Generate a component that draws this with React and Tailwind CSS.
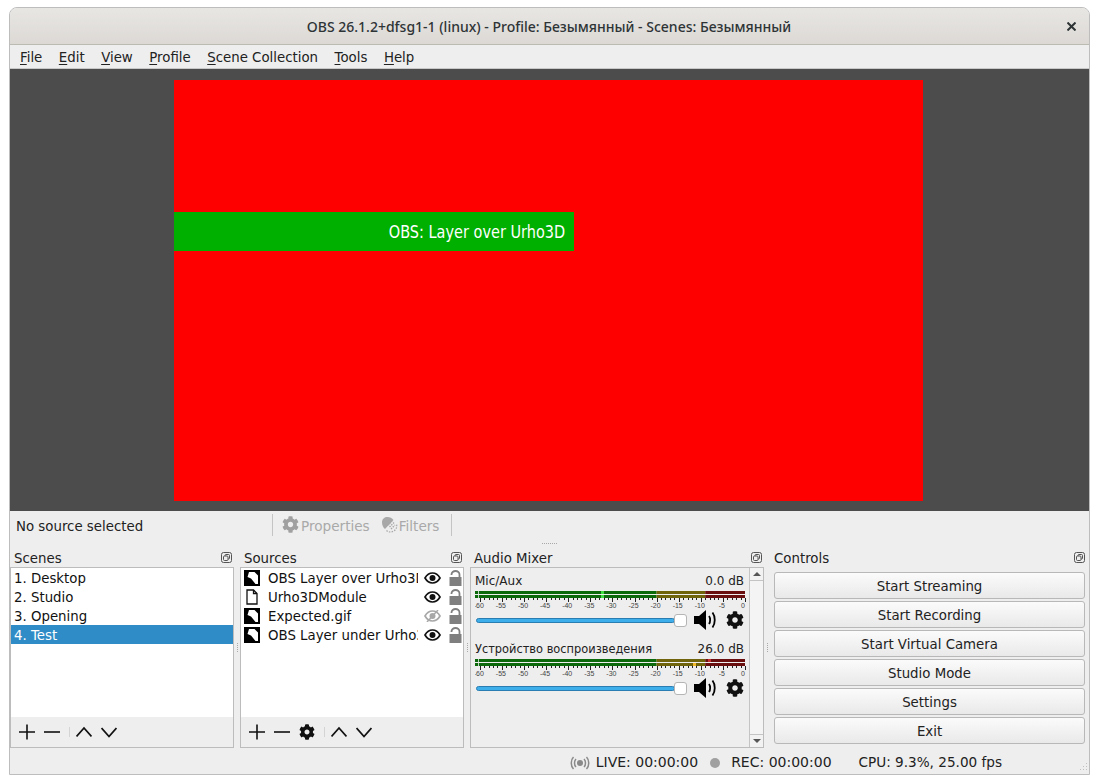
import { FaCog } from "react-icons/fa";

const FONT = "font-['DejaVu_Sans',sans-serif]";

const menus = [
  ["F", "ile"],
  ["E", "dit"],
  ["V", "iew"],
  ["P", "rofile"],
  ["S", "cene Collection"],
  ["T", "ools"],
  ["H", "elp"],
];

const scenes = ["1. Desktop", "2. Studio", "3. Opening", "4. Test"];

const sources = [
  { name: "OBS Layer over Urho3D", kind: "image", visible: true },
  { name: "Urho3DModule", kind: "file", visible: true },
  { name: "Expected.gif", kind: "image", visible: false },
  { name: "OBS Layer under Urho3D", kind: "image", visible: true },
];

const controls = ["Start Streaming", "Start Recording", "Start Virtual Camera", "Studio Mode", "Settings", "Exit"];

function FloatIcon() {
  return (
    <svg width="11" height="11" viewBox="0 0 11 11" fill="none" stroke="#555" strokeWidth="1">
      <rect x="0.5" y="0.5" width="10" height="10" rx="2" />
      <rect x="4" y="2.5" width="4.5" height="4.5" rx="1" />
      <rect x="2.5" y="4" width="4.5" height="4.5" rx="1" fill="#eee" />
    </svg>
  );
}

function Grip() {
  return (
    <div className="flex flex-col gap-[1px]">
      {[0, 1, 2, 3, 4].map((i) => (
        <div key={i} className="w-[1px] h-[1px] bg-[#a8a8a8]" />
      ))}
    </div>
  );
}

function Dock({ title, width, titlePad, children }) {
  return (
    <div className={`flex flex-col ${width}`}>
      <div className={`h-[20px] flex items-center justify-between ${titlePad} pr-[2px] text-[13.33px] text-[#222]`}>
        <span className="pt-[4px]">{title}</span>
        <FloatIcon />
      </div>
      {children}
    </div>
  );
}

function Plus() {
  return (
    <svg width="16" height="16" viewBox="0 0 16 16" stroke="#111" strokeWidth="1.6">
      <path d="M8 0.5V15.5M0 8H16" />
    </svg>
  );
}

function Minus() {
  return (
    <svg width="16" height="16" viewBox="0 0 16 16" stroke="#111" strokeWidth="1.6">
      <path d="M0 8H16" />
    </svg>
  );
}

function Chevron({ up }) {
  return (
    <svg width="16" height="16" viewBox="0 0 16 16" fill="none" stroke="#111" strokeWidth="1.8">
      <path d={up ? "M0.5 12.5L8 4L15.5 12.5" : "M0.5 4L8 12.5L15.5 4"} />
    </svg>
  );
}

function ToolSep() {
  return <div className="w-[1px] h-[10px] bg-[#d4d4d4]" />;
}

function ImageIcon() {
  return (
    <svg width="16" height="16" viewBox="0 0 16 16">
      <rect width="16" height="16" fill="#000" />
      <path d="M5 2H14V14H11.5L7 8.5L3.5 7Z" fill="#fff" />
      <path d="M10.5 2H14V5.5Z" fill="#000" />
    </svg>
  );
}

function FileIcon() {
  return (
    <svg width="16" height="16" viewBox="0 0 16 16" fill="none" stroke="#111" strokeWidth="1.3">
      <path d="M3 1H9.5L13 4.5V15H3Z" />
      <path d="M9.5 1V4.5H13" />
    </svg>
  );
}

function EyeIcon({ off }) {
  const color = off ? "#a8a8a8" : "#111";
  return (
    <svg width="17" height="12" viewBox="0 0 17 12" fill="none">
      <path d="M1 6C3 2.5 5.5 1 8.5 1S14 2.5 16 6C14 9.5 11.5 11 8.5 11S3 9.5 1 6Z" stroke={color} strokeWidth="1.7" />
      <circle cx="8.5" cy="6" r="3" fill={color} />
      {off && <path d="M14 0L3 12" stroke={color} strokeWidth="1.5" />}
    </svg>
  );
}

function LockIcon() {
  return (
    <svg width="13" height="16" viewBox="0 0 13 16" fill="none">
      <path d="M2.5 5V4.5C2.5 2.5 4.3 1 6.5 1S10.5 2.5 10.5 4.5V8" stroke="#7f7f7f" strokeWidth="1.8" />
      <rect x="0.5" y="7" width="12" height="9" fill="#7f7f7f" />
    </svg>
  );
}

function FilterIcon() {
  return (
    <svg width="18" height="18" viewBox="0 0 18 18" fill="none">
      <path d="M2 6C2 3 4.5 1 7.5 1C10 1 12 2 13.5 4L5 13C3 11.5 2 9 2 6Z" fill="#a8a8a8" />
      <path d="M8 9L12 5M9.5 11L14 6.5M11 13L15 9" stroke="#a8a8a8" strokeWidth="1.4" strokeDasharray="1.5 1" />
      <path d="M6.5 14.5C8.5 16.5 12 16.5 14.5 14.5S17 10 16.5 8" stroke="#a8a8a8" strokeWidth="1.2" strokeDasharray="1.5 1.2" />
    </svg>
  );
}

function SpeakerIcon() {
  return (
    <svg width="23" height="22" viewBox="0 0 23 22" fill="none">
      <path d="M0 7H5L12 1V21L5 15H0Z" fill="#000" />
      <path d="M15 7C16.5 9 16.5 13 15 15" stroke="#000" strokeWidth="1.8" />
      <path d="M18.5 3.5C21.5 7.5 21.5 14.5 18.5 18.5" stroke="#000" strokeWidth="1.8" />
    </svg>
  );
}

function Meter({ top, bottom }) {
  const x = (db) => 270 + db * 4.42;
  const ticks = [];
  for (let db = -60; db <= 0; db++) ticks.push(db);
  const labels = [];
  for (let db = -60; db <= 0; db += 5) labels.push(db);
  const bar = (y) => (
    <g key={y}>
      <rect x="0" y={y} width="3" height="3" fill="#0b680b" />
      <rect x={x(-60) - 1} y={y} width={x(-20) - x(-60) + 1} height="3" fill="#0b680b" />
      <rect x={x(-20)} y={y} width={x(-9) - x(-20)} height="3" fill="#6f640c" />
      <rect x={x(-9)} y={y} width={x(0) - x(-9)} height="3" fill="#690f0f" />
    </g>
  );
  return (
    <svg width="272" height="19" viewBox="0 0 272 19" className="block">
      {bar(0)}
      {bar(4)}
      {top && <rect x={top.x} y="0" width="3" height="3" fill={top.color} />}
      {bottom && <rect x={bottom.x} y="4" width="3" height="3" fill={bottom.color} />}
      {top && top.both && <rect x={top.x} y="4" width="3" height="3" fill={top.color} />}
      {ticks.map((db) => (
        <rect key={db} x={Math.round(x(db))} y="7" width="1" height={db % 5 === 0 ? 4 : 2} fill="#222" />
      ))}
      {labels.map((db) => (
        <text
          key={db}
          x={db === 0 ? 268 : x(db) - 1}
          y="17"
          textAnchor="middle"
          fontSize="7"
          fill="#444"
          fontFamily="Liberation Sans, sans-serif"
        >
          {db}
        </text>
      ))}
    </svg>
  );
}

function MixerStrip({ name, nameSize, db, top, bottom }) {
  return (
    <div className="flex flex-col h-[68px]">
      <div className="h-[20px] flex items-center justify-between pl-[4px] pr-[5px] text-[12px] text-[#222] leading-none">
        <span className={nameSize}>{name}</span>
        <span>{db}</span>
      </div>
      <div className="pl-[4px]">
        <Meter top={top} bottom={bottom} />
      </div>
      <div className="flex items-center h-[20px] pl-[5px]">
        <div className="w-[199px] h-[5px] rounded-full bg-[#3daee9] border border-[#2a7db0]" />
        <div className="w-[13px] h-[13px] rounded-[3px] bg-white border border-[#b5b5b5] -ml-[1px]" />
        <div className="ml-[7px]">
          <SpeakerIcon />
        </div>
        <FaCog className="ml-[9px] text-[#111] w-[18px] h-[18px]" />
      </div>
    </div>
  );
}

function ScrollArrow({ up }) {
  return (
    <div className={`h-[13px] flex items-center justify-center ${up ? "border-b" : "border-t"} border-[#c4c4c4] bg-[#f2f2f2]`}>
      <div
        className={`w-0 h-0 border-l-[4px] border-r-[4px] border-l-transparent border-r-transparent ${
          up ? "border-b-[4px] border-b-[#555]" : "border-t-[4px] border-t-[#555]"
        }`}
      />
    </div>
  );
}

export default function App() {
  return (
    <div className={`w-[1099px] h-[784px] bg-white pl-[9px] pt-[7px] ${FONT}`}>
      <div className="w-[1081px] h-[768px] border border-[#bdbdbd] rounded-t-[8px] overflow-hidden flex flex-col bg-[#eeeeee]">
        {/* Title bar */}
        <div className="h-[37px] shrink-0 border-b border-[#bdb9b3] bg-gradient-to-b from-[#e8e6e3] to-[#dcd9d5] flex items-center pr-[13px]">
          <div className="flex-1 text-center text-[14px] font-medium text-[#2e3436] font-['Noto_Sans',sans-serif] pl-[21px]">
            OBS 26.1.2+dfsg1-1 (linux) - Profile: Безымянный - Scenes: Безымянный
          </div>
          <svg width="9" height="9" viewBox="0 0 9 9" stroke="#2e3436" strokeWidth="2">
            <path d="M0.5 0.5L8.5 8.5M8.5 0.5L0.5 8.5" />
          </svg>
        </div>

        {/* Menu bar */}
        <div className="h-[24px] shrink-0 border-b border-[#c8c8c8] flex items-center pl-[10px] pt-[2px] gap-[16.5px] text-[13.33px] text-[#222]">
          {menus.map(([key, rest]) => (
            <span key={key}>
              <span className="underline underline-offset-2">{key}</span>
              {rest}
            </span>
          ))}
        </div>

        {/* Preview */}
        <div className="h-[442px] shrink-0 bg-[#4c4c4c] flex justify-center items-start pt-[11px] pr-[2px]">
          <div className="w-[749px] h-[421px] bg-[#ff0000] pt-[132px]">
            <div className="w-[400px] h-[39px] bg-[#00b000] flex items-center justify-end pr-[9px] text-white text-[18px]">
              <span className="inline-block whitespace-nowrap origin-right [transform:scaleX(0.805)]">OBS: Layer over Urho3D</span>
            </div>
          </div>
        </div>

        {/* Context bar */}
        <div className="h-[28px] shrink-0 flex items-center pl-[6px] text-[13.33px] text-[#222]">
          <div className="w-[256px] pt-[3px]">No source selected</div>
          <div className="w-[1px] h-[22px] bg-[#c4c4c4]" />
          <div className="flex items-center gap-[2px] ml-[9px] text-[#a9a9a9] text-[13.6px]">
            <FaCog className="w-[17px] h-[17px] text-[#a0a0a0]" />
            <span className="pt-[3px]">Properties</span>
          </div>
          <div className="flex items-center ml-[10px] text-[#a9a9a9] text-[13.6px]">
            <FilterIcon />
            <span className="ml-[1px] pt-[3px]">Filters</span>
          </div>
          <div className="w-[1px] h-[22px] bg-[#c4c4c4] ml-[12px]" />
        </div>

        {/* Splitter */}
        <div className="h-[8px] shrink-0 flex items-center justify-center gap-[1px]">
          {[0, 1, 2, 3, 4, 5, 6, 7].map((i) => (
            <div key={i} className="w-[1px] h-[1px] bg-[#a8a8a8]" />
          ))}
        </div>

        {/* Docks */}
        <div className="h-[201px] shrink-0 flex text-[13.33px] text-[#222]">
          <Dock title="Scenes" width="w-[224px]" titlePad="pl-[4px]">
            <div className="h-[181px] border border-[#bcbcbc] flex flex-col">
              <div className="flex-1 bg-white">
                {scenes.map((s, i) => (
                  <div key={s} className={`h-[19px] leading-[21px] pl-[3px] ${i === 3 ? "bg-[#308cc6] text-white" : "text-[#111]"}`}>
                    {s}
                  </div>
                ))}
              </div>
              <div className="h-[30px] flex items-center pl-[8px]">
                <Plus />
                <div className="ml-[9px]">
                  <Minus />
                </div>
                <div className="ml-[9px]">
                  <ToolSep />
                </div>
                <div className="ml-[6px]">
                  <Chevron up />
                </div>
                <div className="ml-[9px]">
                  <Chevron />
                </div>
              </div>
            </div>
          </Dock>

          <div className="w-[6px] flex items-center justify-center">
            <Grip />
          </div>

          <Dock title="Sources" width="w-[224px]" titlePad="pl-[4px]">
            <div className="h-[181px] border border-[#bcbcbc] flex flex-col">
              <div className="flex-1 bg-white">
                {sources.map((s) => (
                  <div key={s.name} className="h-[19px] flex items-center pl-[3px] text-[#111]">
                    <div className="w-[16px] h-[16px] shrink-0">{s.kind === "image" ? <ImageIcon /> : <FileIcon />}</div>
                    <div className="w-[150px] h-[19px] leading-[21px] ml-[8px] overflow-hidden whitespace-nowrap shrink-0">{s.name}</div>
                    <div className="ml-[6px] w-[17px] shrink-0">
                      <EyeIcon off={!s.visible} />
                    </div>
                    <div className="ml-[8px] shrink-0 flex">
                      <LockIcon />
                    </div>
                  </div>
                ))}
              </div>
              <div className="h-[30px] flex items-center pl-[8px]">
                <Plus />
                <div className="ml-[9px]">
                  <Minus />
                </div>
                <FaCog className="ml-[9px] w-[16px] h-[16px] text-[#111]" />
                <div className="ml-[9px]">
                  <ToolSep />
                </div>
                <div className="ml-[6px]">
                  <Chevron up />
                </div>
                <div className="ml-[9px]">
                  <Chevron />
                </div>
              </div>
            </div>
          </Dock>

          <div className="w-[6px] flex items-center justify-center">
            <Grip />
          </div>

          <Dock title="Audio Mixer" width="w-[294px]" titlePad="pl-[4px]">
            <div className="h-[181px] border border-[#bcbcbc] flex">
              <div className="w-[278px] pt-[3px]">
                <MixerStrip name="Mic/Aux" db="0.0 dB" top={{ x: 126, color: "#3fdc3f", both: true }} />
                <MixerStrip
                  name="Устройство воспроизведения"
                  nameSize="text-[11.4px] pt-[2px]"
                  db="26.0 dB"
                  top={{ x: 233, color: "#c43030" }}
                  bottom={{ x: 218, color: "#f0b92c" }}
                />
              </div>
              <div className="w-[14px] border-l border-[#c4c4c4] flex flex-col justify-between bg-[#f4f4f4]">
                <ScrollArrow up />
                <ScrollArrow />
              </div>
            </div>
          </Dock>

          <div className="w-[10px] flex items-center pl-[3px]">
            <Grip />
          </div>

          <Dock title="Controls" width="w-[313px]" titlePad="pl-0">
            <div className="w-[311px] pt-[5px] flex flex-col gap-[2px]">
              {controls.map((c) => (
                <button
                  key={c}
                  className="h-[27px] pt-[2px] rounded-[3px] border border-[#b8b8b8] bg-gradient-to-b from-[#fbfbfb] to-[#e9e9e9] text-[13.33px] text-[#222] flex items-center justify-center"
                >
                  {c}
                </button>
              ))}
            </div>
          </Dock>
        </div>

        {/* Status bar */}
        <div className="flex-1 flex items-center justify-end pr-[1px] text-[13.6px] text-[#222]">
          <svg className="mt-[3px]" width="20" height="14" viewBox="0 0 20 14" fill="none" stroke="#8a8a8a" strokeWidth="1.5">
            <circle cx="10" cy="7" r="3" fill="#8a8a8a" stroke="none" />
            <path d="M6 3C4 5 4 9 6 11M14 3C16 5 16 9 14 11M3.5 1C0.5 4 0.5 10 3.5 13M16.5 1C19.5 4 19.5 10 16.5 13" />
          </svg>
          <span className="ml-[6px] pt-[3px] text-[14px]">LIVE: 00:00:00</span>
          <div className="ml-[12px] mt-[3px] w-[10px] h-[10px] rounded-full bg-[#a0a0a0]" />
          <span className="ml-[11px] pt-[3px] text-[14px]">REC: 00:00:00</span>
          <span className="ml-[27px] pt-[3px]">CPU: 9.3%, 25.00 fps</span>
          <svg className="ml-[76px] self-end mb-[1px]" width="10" height="10" viewBox="0 0 10 10" fill="#c0c0c0">
            <rect x="8" y="0" width="1" height="1" />
            <rect x="5" y="3" width="1" height="1" />
            <rect x="8" y="3" width="1" height="1" />
            <rect x="2" y="6" width="1" height="1" />
            <rect x="5" y="6" width="1" height="1" />
            <rect x="8" y="6" width="1" height="1" />
          </svg>
        </div>
      </div>
    </div>
  );
}
